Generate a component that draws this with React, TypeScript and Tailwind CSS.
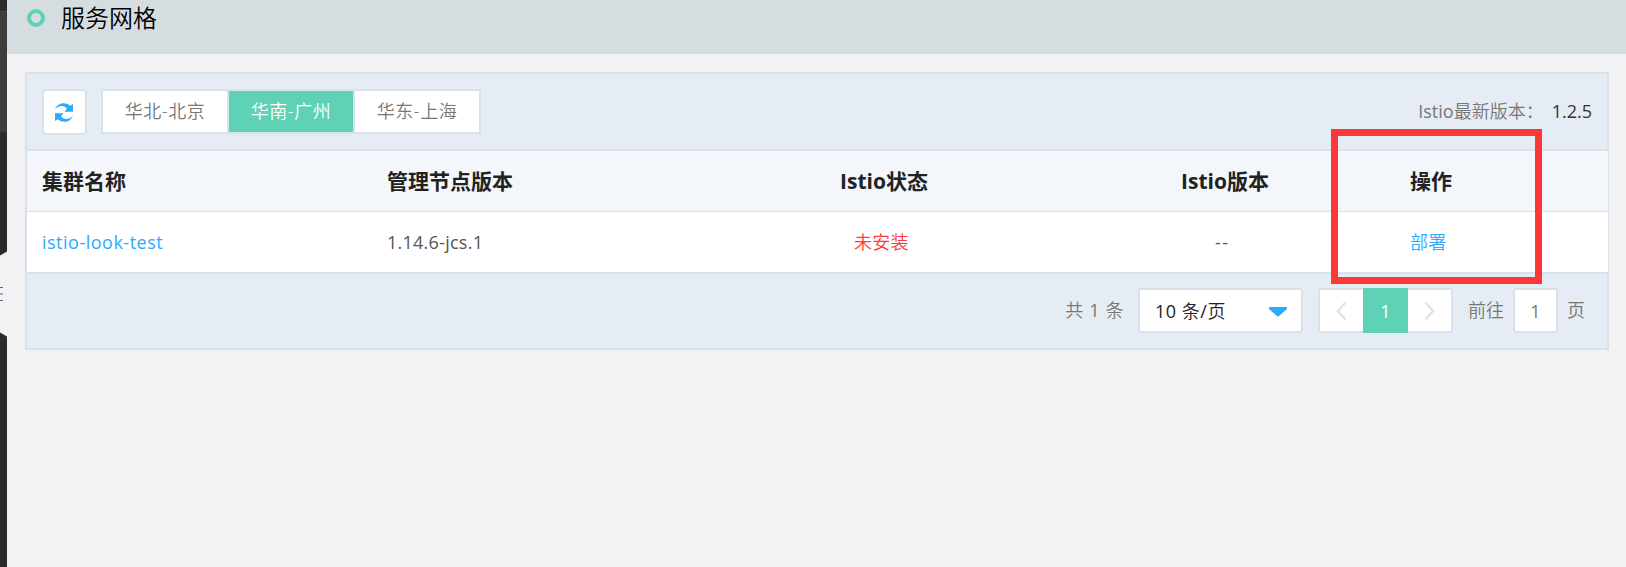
import type { ReactNode } from 'react';

const columns = 'grid grid-cols-[345px_453px_341px_229px_1fr] items-center pl-[14px]';

function Region({ label, active = false }: { label: string; active?: boolean }) {
  return (
    <button
      className={
        active
          ? 'flex w-[124px] items-center justify-center bg-[#5fd1b5] pb-px text-white'
          : 'flex w-[124px] items-center justify-center bg-white pb-px text-[#777777]'
      }
    >
      <span className="tracking-[0.5px]">{label}</span>
    </button>
  );
}

function Sidebar() {
  return (
    <aside className="flex h-full w-[7px] shrink-0 flex-col overflow-hidden bg-[#2b2b2b]">
      <div className="mt-[11px] h-[121px] border-t border-[#4a4a4a] bg-[#3c3c3c]" />
      <svg className="mt-[119px] block shrink-0" width="7" height="86" viewBox="0 0 7 86">
        <path d="M0 4.500 7 .500V85.500L0 81.500Z" fill="#f2f2f4" />
        <path d="M0 36.500h3M0 43h3M0 49.500h3" stroke="#596b80" strokeWidth="1" />
      </svg>
    </aside>
  );
}

function Box({ className, children }: { className: string; children: ReactNode }) {
  return (
    <div className={`flex h-[45px] shrink-0 items-center rounded-[3px] border-2 border-[#d9e2ea] bg-white ${className}`}>
      {children}
    </div>
  );
}

export default function App() {
  return (
    <div className="relative flex h-[567px] w-[1626px] overflow-hidden bg-[#f2f2f4] font-['Open_Sans','Noto_Sans_CJK_SC',sans-serif] text-[18px] leading-6 font-[350]">
      <Sidebar />
      <main className="flex flex-1 flex-col">
        <header className="flex h-[54px] items-start bg-[#d6dde0] pl-5">
          <span className="mt-[9px] size-[18px] rounded-full border-4 border-[#5fd1b5]" />
          <h1 className="ml-4 text-[24px] leading-[35px] font-[350] text-black">服务网格</h1>
        </header>

        <section className="mt-[18px] ml-[18px] flex h-[278px] w-[1584px] flex-col">
          <div className="flex h-[79px] items-start border-2 border-[#d9e2ea] bg-[#e5ecf4] pt-[15px] pl-[15px]">
            <button className="flex h-[46px] w-[45px] items-center justify-center rounded-[4px] border-2 border-[#d9e2ea] bg-white pr-px">
              <svg width="18" height="19" viewBox="0 0 18 19" fill="#2baaff">
                <path d="M0 6.300C1.500 2.500 4.500.2 8.500.2c3 0 5.200 1 6.700 2.500L18 1v7.800H9.500l2.400-3C11 4.400 9.200 3 6.800 3 4 3 1.500 4.400 0 6.300Z" />
                <path d="M18 12.700c-1.500 3.800-4.500 6.100-8.500 6.100-3 0-5.200-1-6.700-2.500L0 18v-7.800h8.500l-2.400 3c.9 1.400 2.700 2.800 5.100 2.800 2.800 0 5.300-1.400 6.800-3.300Z" />
              </svg>
            </button>
            <div className="ml-[14px] flex h-[45px] gap-[2px] border-2 border-[#d9e2ea] bg-[#d9e2ea]">
              <Region label="华北-北京" />
              <Region label="华南-广州" active />
              <Region label="华东-上海" />
            </div>
            <div className="mt-[10px] mr-[15px] ml-auto flex">
              <span className="text-[#777777]"><span className="font-normal">Istio</span>最新版本：</span>
              <span className="ml-2 font-normal text-[#333333]">1.2.5</span>
            </div>
          </div>

          <div className="border-r border-l-2 border-[#d9e2ea]">
            <div className={`${columns} h-[61px] border-b border-[#d9e2ea] bg-[#f3f6fb] text-[21px] font-bold text-[#222222]`}>
              <span className="pl-px">集群名称</span>
              <span className="pl-px">管理节点版本</span>
              <span className="pl-px">Istio状态</span>
              <span className="pl-px">Istio版本</span>
              <span className="pl-px">操作</span>
            </div>
            <div className={`${columns} h-[60px] bg-white text-[#555555]`}>
              <a className="pl-px font-normal tracking-[0.5px] text-[#2baaff]">istio-look-test</a>
              <span className="pl-px font-normal tracking-[0.25px]">1.14.6-jcs.1</span>
              <span className="pl-[15px] tracking-[0.3px] text-[#ff3737]">未安装</span>
              <span className="pl-[35px] font-normal tracking-[1.5px]">--</span>
              <a className="pl-px tracking-[0.3px] text-[#2baaff]">部署</a>
            </div>
          </div>

          <footer className="flex h-[78px] items-start border-2 border-[#d9e2ea] bg-[#e5ecf4] pt-[14px] text-[#777777]">
            <span className="mt-[10px] mr-[14px] ml-auto tracking-[0.6px]">
              共 <span className="font-normal">1</span> 条
            </span>
            <Box className="w-[165px] justify-between pr-[14px] pl-[15px] text-[#222222]">
              <span className="tracking-[0.5px]">
                <span className="font-normal">10</span> 条<span className="font-normal">/</span>页
              </span>
              <svg width="18" height="10" viewBox="0 0 18 10" className="mt-[3px]">
                <path d="M1 0h16q1 0 1 1v1L10 9q-1 1-2 0L0 2V1Q0 0 1 0Z" fill="#2baaff" />
              </svg>
            </Box>
            <div className="ml-[15px] flex h-[45px]">
              <Box className="w-[45px] justify-center rounded-r-none border-r-0">
                <svg width="11" height="20" viewBox="0 0 11 20">
                  <path d="m9.500 1.500-7.500 8.500 7.500 8.500" fill="none" stroke="#e2e2e2" strokeWidth="2.500" />
                </svg>
              </Box>
              <span className="flex w-[45px] items-center justify-center bg-[#5fd1b5] font-normal text-white">1</span>
              <Box className="w-[45px] justify-center rounded-l-none border-l-0">
                <svg width="11" height="20" viewBox="0 0 11 20">
                  <path d="m1.500 1.500 7.500 8.500-7.500 8.500" fill="none" stroke="#e2e2e2" strokeWidth="2.500" />
                </svg>
              </Box>
            </div>
            <span className="mt-[10px] ml-[15px]">前往</span>
            <Box className="ml-[9px] w-[45px] justify-center font-normal">1</Box>
            <span className="mt-[10px] mr-[22px] ml-[9px]">页</span>
          </footer>
        </section>
      </main>
      <div className="pointer-events-none absolute top-[129px] left-[1331px] h-[155px] w-[211px] border-[7px] border-[#fc3737]" />
    </div>
  );
}
